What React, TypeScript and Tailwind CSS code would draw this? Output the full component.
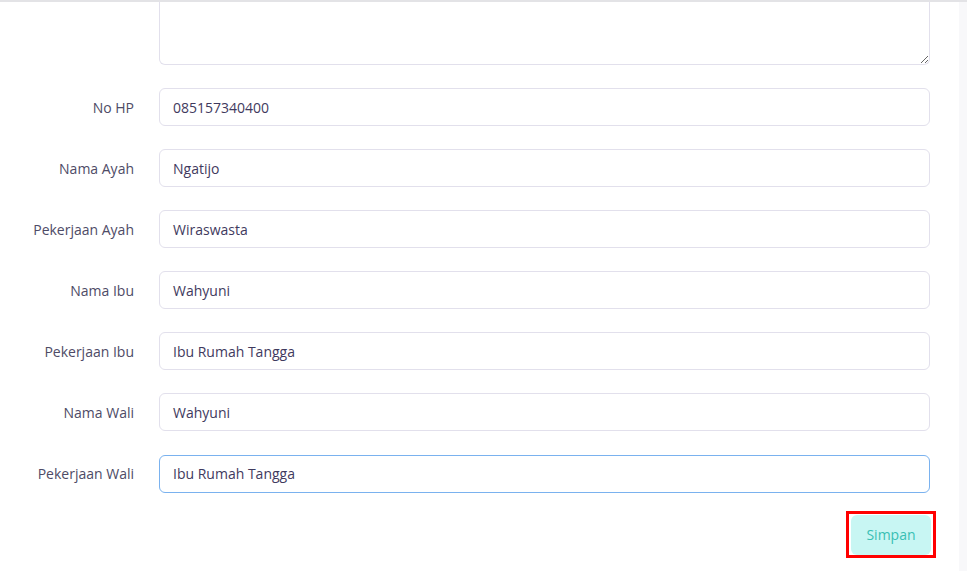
const fields = [
  { label: 'No HP', value: '085157340400' },
  { label: 'Nama Ayah', value: 'Ngatijo' },
  { label: 'Pekerjaan Ayah', value: 'Wiraswasta' },
  { label: 'Nama Ibu', value: 'Wahyuni' },
  { label: 'Pekerjaan Ibu', value: 'Ibu Rumah Tangga' },
  { label: 'Nama Wali', value: 'Wahyuni' },
  { label: 'Pekerjaan Wali', value: 'Ibu Rumah Tangga', focused: true },
];

export default function App() {
  return (
    <div
      className="flex h-[571px] w-full overflow-hidden border-t-2 border-[#e3e3e6] bg-[#f8f8fa]"
      style={{ fontFamily: '"Open Sans", "Noto Sans", sans-serif' }}
    >
      <div className="w-[959px] shrink-0 bg-white">
        {/* address textarea, scrolled so only its lower part shows */}
        <div className="flex pl-[159px]">
          <textarea
            readOnly
            className="block h-[63px] w-[771px] resize-y rounded-b-md border border-t-0 border-[#e2e0ec] bg-white outline-none"
          />
        </div>

        <div className="mt-[23px] flex flex-col gap-[23.1px]">
          {fields.map((f) => (
            <div key={f.label} className="flex items-center gap-[25px]">
              <label className="w-[134px] text-right text-[14px] text-[#4e4b66]">{f.label}</label>
              <div
                className={
                  f.focused
                    ? 'flex h-[38px] w-[771px] items-center rounded-md border border-[#7ab2ef] px-[13px] text-[14px] text-[#3f3a5e]'
                    : 'flex h-[38px] w-[771px] items-center rounded-md border border-[#e2e0ec] px-[13px] text-[14px] text-[#3f3a5e]'
                }
              >
                {f.value}
              </div>
            </div>
          ))}
        </div>

        <div className="mt-[18px] flex justify-end pr-[23px]">
          <div className="border-[3px] border-[#ff0000] px-[2px] pt-[1px]">
            <button
              type="button"
              className="h-[40px] w-[80px] rounded-md bg-[#c8f6f3] text-[14px] font-medium text-[#38bfb3]"
            >
              Simpan
            </button>
          </div>
        </div>
      </div>
    </div>
  );
}
